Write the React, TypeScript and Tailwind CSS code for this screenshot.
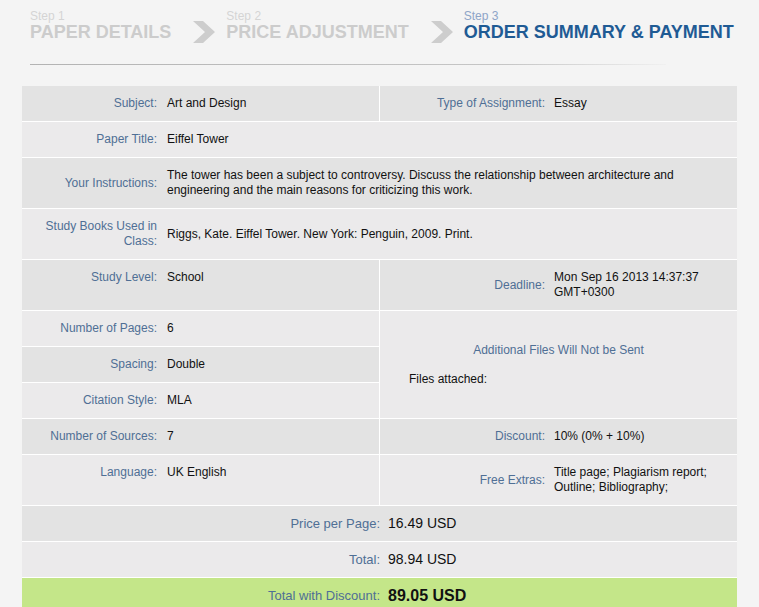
const LABEL = "text-[#4f6f95]";

const Chevron = () => (
  <svg width="22" height="22" viewBox="0 0 22 22" className="shrink-0">
    <polygon points="0,0 10,0 22,11 10,22 0,22 12,11" fill="#cdcdcd" />
  </svg>
);

const Step = ({ n, title, active }: { n: number; title: string; active?: boolean }) => (
  <div className="flex flex-col">
    <span className={`text-[12px] leading-[13px] ${active ? "text-[#8ea5c8]" : "text-[#d4d4d4]"}`}>
      Step {n}
    </span>
    <span
      className={`text-[18px] leading-[19px] font-bold ${active ? "text-[#1f5b94]" : "text-[#cccccc]"}`}
    >
      {title}
    </span>
  </div>
);

// label + value cell, used on both halves
const Cell = ({
  label,
  children,
  labelW,
  gap,
  center,
}: {
  label: React.ReactNode;
  children?: React.ReactNode;
  labelW: string;
  gap: string;
  center?: boolean;
}) => (
  <div className={`flex py-[10px] ${gap} ${center ? "items-center" : "items-start"}`}>
    <div className={`${labelW} shrink-0 text-right ${LABEL}`}>{label}</div>
    <div className="flex-1 pr-[10px] text-[#111]">{children}</div>
  </div>
);

const Left = ({ label, children, center }: { label: React.ReactNode; children?: React.ReactNode; center?: boolean }) => (
  <Cell label={label} labelW="w-[135px]" gap="gap-[10px]" center={center}>
    {children}
  </Cell>
);

const Right = ({ label, children }: { label: React.ReactNode; children?: React.ReactNode }) => (
  <Cell label={label} labelW="w-[165px]" gap="gap-[9px]" center>
    {children}
  </Cell>
);

const Pair = ({ dark, left, right }: { dark?: boolean; left: React.ReactNode; right: React.ReactNode }) => (
  <div className={`flex border-b border-white ${dark ? "bg-[#e3e3e3]" : "bg-[#ebeaeb]"}`}>
    <div className="w-[358px] shrink-0 border-r border-white">{left}</div>
    <div className="flex-1">{right}</div>
  </div>
);

const Full = ({ dark, children }: { dark?: boolean; children: React.ReactNode }) => (
  <div className={`border-b border-white ${dark ? "bg-[#e3e3e3]" : "bg-[#ebeaeb]"}`}>{children}</div>
);

const PriceRow = ({
  label,
  value,
  bg,
  big,
}: {
  label: string;
  value: string;
  bg: string;
  big?: boolean;
}) => (
  <div className={`flex items-center h-[36px] border-b border-white ${bg}`}>
    <div className={`w-[358px] shrink-0 text-right text-[13px] ${LABEL}`}>{label}</div>
    <div className={`pl-[8px] text-[#111] ${big ? "text-[16px] font-bold" : "text-[14px]"}`}>{value}</div>
  </div>
);

export default function App() {
  return (
    <div className="min-h-screen w-full bg-[#f4f4f4] font-['Liberation_Sans',Arial,sans-serif] text-[12px] leading-[15px] overflow-hidden">
      {/* Steps header */}
      <div className="pt-[9px] pl-[30px] flex items-center">
        <Step n={1} title="PAPER DETAILS" />
        <div className="ml-[22px] mr-[11px] mt-[12px]">
          <Chevron />
        </div>
        <Step n={2} title="PRICE ADJUSTMENT" />
        <div className="ml-[22px] mr-[11px] mt-[12px]">
          <Chevron />
        </div>
        <Step n={3} title="ORDER SUMMARY & PAYMENT" active />
      </div>
      <div className="ml-[30px] mt-[21px] mb-[21px] w-[636px] h-px bg-linear-to-r from-[#b3b3b3] via-[#c6c6c6] via-75% to-[#f0f0f0]" />

      {/* Summary table */}
      <div className="ml-[22px] w-[715px]">
        <Pair
          dark
          left={<Left label="Subject:" center>Art and Design</Left>}
          right={<Right label="Type of Assignment:">Essay</Right>}
        />
        <Full>
          <Left label="Paper Title:" center>Eiffel Tower</Left>
        </Full>
        <Full dark>
          <Left label="Your Instructions:" center>
            The tower has been a subject to controversy. Discuss the relationship between architecture and
            engineering and the main reasons for criticizing this work.
          </Left>
        </Full>
        <Full>
          <Left label="Study Books Used in Class:" center>
            Riggs, Kate. Eiffel Tower. New York: Penguin, 2009. Print.
          </Left>
        </Full>
        <Pair
          dark
          left={<Left label="Study Level:">School</Left>}
          right={
            <Right label="Deadline:">
              Mon Sep 16 2013 14:37:37
              <br />
              GMT+0300
            </Right>
          }
        />

        <div className="flex border-b border-white">
          <div className="w-[358px] shrink-0 border-r border-white">
            <div className="bg-[#ebeaeb] border-b border-white">
              <Left label="Number of Pages:" center>6</Left>
            </div>
            <div className="bg-[#e3e3e3] border-b border-white">
              <Left label="Spacing:" center>Double</Left>
            </div>
            <div className="bg-[#ebeaeb]">
              <Left label="Citation Style:" center>MLA</Left>
            </div>
          </div>
          <div className="flex-1 bg-[#ebeaeb] flex flex-col justify-center gap-[14px]">
            <div className={`text-center ${LABEL}`}>Additional Files Will Not be Sent</div>
            <div className="pl-[29px] text-[#111]">Files attached:</div>
          </div>
        </div>

        <Pair
          dark
          left={<Left label="Number of Sources:" center>7</Left>}
          right={<Right label="Discount:">10% (0% + 10%)</Right>}
        />
        <Pair
          left={<Left label="Language:">UK English</Left>}
          right={
            <Right label="Free Extras:">
              Title page; Plagiarism report;
              <br />
              Outline; Bibliography;
            </Right>
          }
        />

        <PriceRow label="Price per Page:" value="16.49 USD" bg="bg-[#e3e3e3]" />
        <PriceRow label="Total:" value="98.94 USD" bg="bg-[#ebeaeb]" />
        <PriceRow label="Total with Discount:" value="89.05 USD" bg="bg-[#c4e689]" big />
      </div>
    </div>
  );
}
